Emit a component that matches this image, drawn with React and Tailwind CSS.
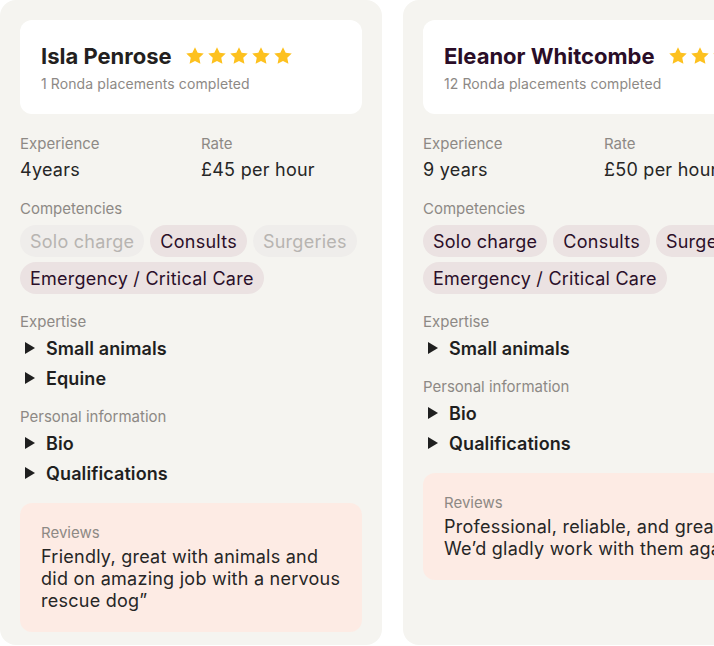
import React from 'react';

const Star = () => (
  <svg viewBox="0 0 24 24" className="w-[20px] h-[20px]" fill="#fdc11f">
    <path d="M12 1.5l3.2 6.7 7.3.9-5.4 5.1 1.4 7.2L12 17.9l-6.5 3.5 1.4-7.2-5.4-5.1 7.3-.9z" />
  </svg>
);

const Caret = () => (
  <svg viewBox="0 0 10 12" className="w-[10px] h-[12px] shrink-0" fill="#1f1f1f">
    <polygon points="0,0 10,6 0,12" />
  </svg>
);

const Label = ({ children, className = '' }) => (
  <div className={`text-[15px] leading-5 text-[#8d8985] ${className}`}>{children}</div>
);

const Toggle = ({ children }) => (
  <div className="flex items-center gap-[11px] pl-[5px] h-[30px] text-[18px] font-semibold tracking-[0.1px] text-[#1f1f1f]">
    <Caret />
    <span>{children}</span>
  </div>
);

const Chip = ({ label, active }) => (
  <span
    className={`h-[32px] px-[10px] flex items-center rounded-full text-[18px] tracking-[0.25px] whitespace-nowrap ${
      active ? 'bg-[#ebe2e2] text-[#2b0f29]' : 'bg-[#efedeb] text-[#b7b4b1]'
    }`}
  >
    {label}
  </span>
);

const Card = ({ person }) => (
  <div className="w-[382px] shrink-0 h-[645px] bg-[#f5f4f0] rounded-2xl px-5 pt-5">
    <div className="bg-white rounded-xl p-5 pl-[21px] overflow-hidden">
      <div className="flex items-center h-8 whitespace-nowrap">
        <span className={`text-[22px] font-bold ${person.nameColor}`}>{person.name}</span>
        <div className="flex ml-[13px] gap-[2px] shrink-0">
          {[0, 1, 2, 3, 4].map((i) => (
            <Star key={i} />
          ))}
        </div>
      </div>
      <div className="mt-[2px] text-[14px] leading-5 tracking-[0.1px] text-[#8d8985] whitespace-nowrap">{person.placements}</div>
    </div>

    <div className="grid grid-cols-2 gap-x-5 mt-5">
      <div>
        <Label>Experience</Label>
        <div className="mt-1 text-[18px] leading-6 tracking-[0.25px] text-[#262626] whitespace-nowrap">{person.experience}</div>
      </div>
      <div>
        <Label>Rate</Label>
        <div className="mt-1 text-[18px] leading-6 tracking-[0.25px] text-[#262626] whitespace-nowrap">{person.rate}</div>
      </div>
    </div>

    <Label className="mt-[17px]">Competencies</Label>
    <div className="flex flex-wrap gap-x-[6px] gap-y-[5px] mt-[6px]">
      {person.competencies.map((c) => (
        <Chip key={c.label} {...c} />
      ))}
    </div>

    <Label className="mt-[18px]">Expertise</Label>
    <div className="mt-px">
      {person.expertise.map((e) => (
        <Toggle key={e}>{e}</Toggle>
      ))}
    </div>

    <Label className="mt-[14px]">Personal information</Label>
    <div className="mt-px">
      <Toggle>Bio</Toggle>
      <Toggle>Qualifications</Toggle>
    </div>

    <div className="mt-[15px] bg-[#fdebe4] rounded-xl px-[21px] py-5 overflow-hidden">
      <Label>Reviews</Label>
      <p className="mt-[3px] text-[18px] leading-[22px] tracking-[0.25px] text-[#262626] whitespace-pre">{person.review}</p>
    </div>
  </div>
);

const people = [
  {
    name: 'Isla Penrose',
    nameColor: 'text-[#231f20]',
    placements: '1 Ronda placements completed',
    experience: '4years',
    rate: '£45 per hour',
    competencies: [
      { label: 'Solo charge', active: false },
      { label: 'Consults', active: true },
      { label: 'Surgeries', active: false },
      { label: 'Emergency / Critical Care', active: true },
    ],
    expertise: ['Small animals', 'Equine'],
    review: 'Friendly, great with animals and\ndid on amazing job with a nervous\nrescue dog”',
  },
  {
    name: 'Eleanor Whitcombe',
    nameColor: 'text-[#2a0d27]',
    placements: '12 Ronda placements completed',
    experience: '9 years',
    rate: '£50 per hour',
    competencies: [
      { label: 'Solo charge', active: true },
      { label: 'Consults', active: true },
      { label: 'Surgeries', active: true },
      { label: 'Emergency / Critical Care', active: true },
    ],
    expertise: ['Small animals'],
    review: 'Professional, reliable, and great with clients.\nWe’d gladly work with them again.',
  },
];

export default function App() {
  return (
    <div className="w-[714px] h-[646px] overflow-hidden bg-white flex gap-[21px] font-['Inter',sans-serif]">
      {people.map((p) => (
        <Card key={p.name} person={p} />
      ))}
    </div>
  );
}
